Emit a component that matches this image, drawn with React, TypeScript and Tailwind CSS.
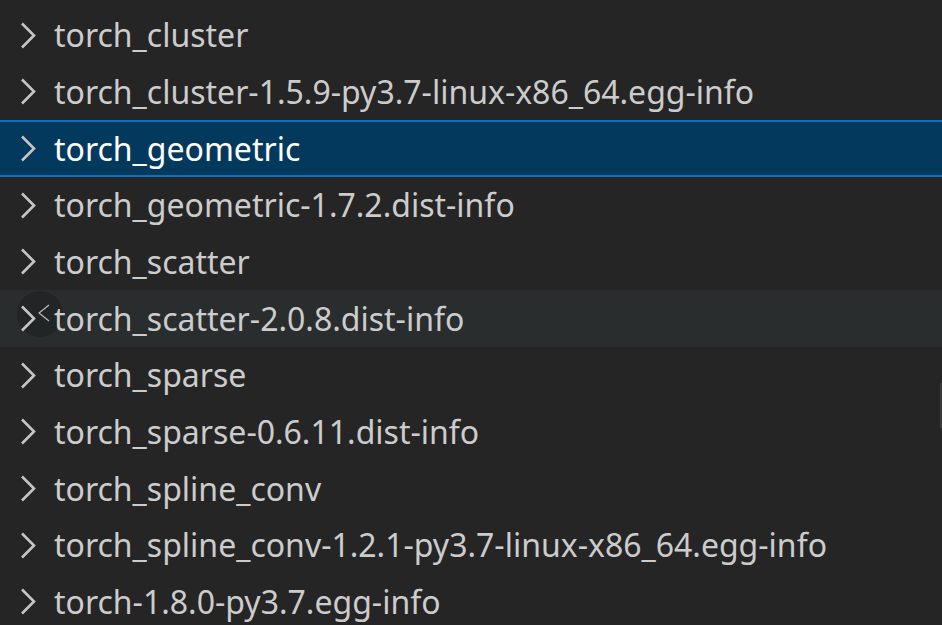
import React from "react";

const items = [
  "torch_cluster",
  "torch_cluster-1.5.9-py3.7-linux-x86_64.egg-info",
  "torch_geometric",
  "torch_geometric-1.7.2.dist-info",
  "torch_scatter",
  "torch_scatter-2.0.8.dist-info",
  "torch_sparse",
  "torch_sparse-0.6.11.dist-info",
  "torch_spline_conv",
  "torch_spline_conv-1.2.1-py3.7-linux-x86_64.egg-info",
  "torch-1.8.0-py3.7.egg-info",
];

const SELECTED = 2;
const HOVERED = 5;

const Chevron = () => (
  <svg width="16" height="27" viewBox="0 0 16 27" fill="none" className="shrink-0">
    <path d="M2 1.5 L14 13.5 L2 25.5" stroke="#c5c5c5" strokeWidth="2.6" />
  </svg>
);

const Row = ({ name, index }: { name: string; index: number }) => {
  const selected = index === SELECTED;
  const hovered = index === HOVERED;
  const base = "relative flex items-center h-[56.67px] pl-[20px] gap-[18px]";
  const look = selected
    ? "bg-[#04395e] border-y-2 border-[#0e6fbd] text-white"
    : hovered
      ? "bg-[#2a2d2e] text-[#cccccc]"
      : "text-[#cccccc]";
  return (
    <div className={`${base} ${look}`}>
      {hovered && (
        <div className="absolute left-[17px] top-[1px] w-[46px] h-[46px] rounded-full bg-[#222526] flex items-center justify-center">
          <svg width="14" height="18" viewBox="0 0 14 18" className="ml-[8px] -mt-[2px]">
            <path d="M12 1 L2 9 L12 17" stroke="#bbbbbb" strokeWidth="1.2" fill="none" />
          </svg>
        </div>
      )}
      <div className="relative">
        <Chevron />
      </div>
      <span className="relative whitespace-nowrap leading-none">{name}</span>
    </div>
  );
};

export default function App() {
  return (
    <div
      className="relative w-[942px] h-[625px] overflow-hidden bg-[#252526] pt-[7px] text-[32px]"
      style={{ fontFamily: '"Noto Sans", "Open Sans", sans-serif' }}
    >
      {items.map((name, i) => (
        <Row key={name} name={name} index={i} />
      ))}
      <div className="absolute right-0 top-[383px] w-[2px] h-[45px] bg-[#3a3a3a]" />
    </div>
  );
}
